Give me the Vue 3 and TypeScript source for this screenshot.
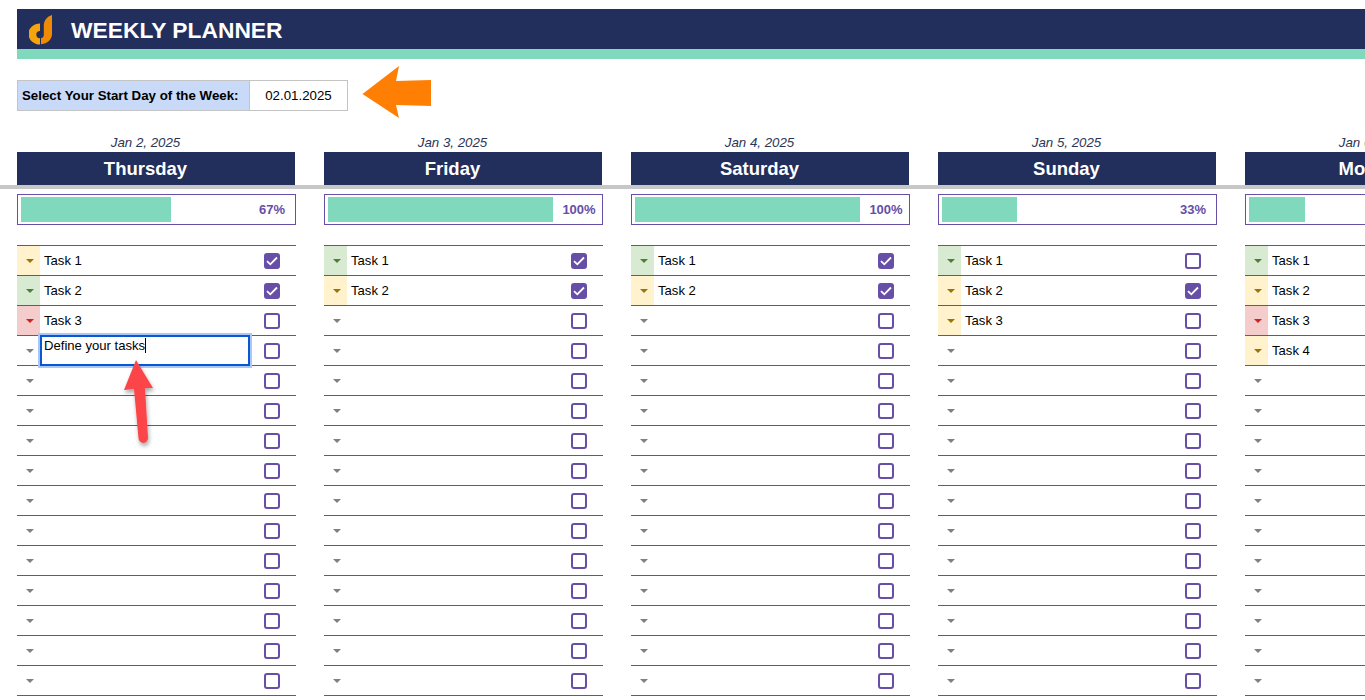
<script setup lang="ts">
type Tone = 'yellow' | 'green' | 'red' | 'none'
interface Task { name: string; tone: Tone; done: boolean }
interface Day { date: string; title: string; pct: number; label: string; tasks: Task[] }

const ROWS = 15
const day = (date: string, title: string, pct: number, label: string, tasks: Task[]): Day => ({
  date, title, pct, label,
  tasks: [...tasks, ...Array.from({ length: ROWS - tasks.length }, (): Task => ({ name: '', tone: 'none', done: false }))],
})

const days: Day[] = [
  day('Jan 2, 2025', 'Thursday', 150, '67%', [
    { name: 'Task 1', tone: 'yellow', done: true },
    { name: 'Task 2', tone: 'green', done: true },
    { name: 'Task 3', tone: 'red', done: false },
  ]),
  day('Jan 3, 2025', 'Friday', 225, '100%', [
    { name: 'Task 1', tone: 'green', done: true },
    { name: 'Task 2', tone: 'yellow', done: true },
  ]),
  day('Jan 4, 2025', 'Saturday', 225, '100%', [
    { name: 'Task 1', tone: 'green', done: true },
    { name: 'Task 2', tone: 'yellow', done: true },
  ]),
  day('Jan 5, 2025', 'Sunday', 75, '33%', [
    { name: 'Task 1', tone: 'green', done: false },
    { name: 'Task 2', tone: 'yellow', done: true },
    { name: 'Task 3', tone: 'yellow', done: false },
  ]),
  day('Jan 6, 2025', 'Monday', 56, '25%', [
    { name: 'Task 1', tone: 'green', done: false },
    { name: 'Task 2', tone: 'yellow', done: false },
    { name: 'Task 3', tone: 'red', done: false },
    { name: 'Task 4', tone: 'yellow', done: false },
  ]),
]
</script>

<template>
  <div class="page">
    <header class="banner">
      <svg class="logo" width="24" height="30" viewBox="0 0 24 30" aria-hidden="true">
        <path d="M11 8.500A11.500 10.500 0 0 0 11 29.500L11 23.300A3.700 3.700 0 0 1 11 15.900Z" fill="#f5a40e" />
        <path d="M12 29.300C18.500 28.500 23 24.500 23 19L23 0C18 1.500 14.800 5.500 14.800 10.500L14.800 19.500A3.400 3.800 0 0 1 12 23.300Z" fill="#ef8a06" />
      </svg>
      <h1 class="banner-title">WEEKLY PLANNER</h1>
    </header>
    <div class="accent"></div>

    <section class="selector">
      <div class="selector-box">
        <div class="selector-label">Select Your Start Day of the Week:</div>
        <div class="selector-value">02.01.2025</div>
      </div>
      <svg class="orange-arrow" width="70" height="52" viewBox="0 0 70 52" aria-hidden="true">
        <path d="M0.500 28L37 0L34 15L69 14L69 40L34 39L37 52Z" fill="#ff7f04" />
      </svg>
    </section>

    <section class="head-row">
      <div v-for="d in days" :key="d.date" class="head-col">
        <div class="date">{{ d.date }}</div>
        <div class="title">{{ d.title }}</div>
      </div>
    </section>
    <div class="rule"></div>

    <section class="body-row">
      <div v-for="(d, di) in days" :key="d.date" class="col">
        <div class="progress">
          <div class="track">
            <div class="fill" :style="{ width: d.pct + 'px' }"></div>
          </div>
          <span class="pct">{{ d.label }}</span>
        </div>
        <div class="tasks">
          <div v-for="(t, i) in d.tasks" :key="i" class="task">
            <div class="chip" :class="t.tone"><span class="caret"></span></div>
            <div class="name">{{ t.name }}</div>
            <span class="check" :class="{ on: t.done }">
              <svg v-if="t.done" width="12" height="10" viewBox="0 0 12 10" aria-hidden="true">
                <path d="M1 5.200L4.300 8.300L11 1.500" fill="none" stroke="#fff" stroke-width="1.800" />
              </svg>
            </span>
            <div v-if="di === 0 && i === 3" class="editor">Define your tasks<span class="cursor"></span></div>
            <svg v-if="di === 0 && i === 3" class="red-arrow" width="50" height="95" viewBox="0 0 50 95" aria-hidden="true">
              <defs>
                <filter id="arrow-shadow" x="-30%" y="-20%" width="160%" height="140%">
                  <feDropShadow dx="1" dy="3" stdDeviation="2" flood-color="#000" flood-opacity="0.35" />
                </filter>
              </defs>
              <path d="M21 5L9 35L19 34L23.500 83.300A4.750 4.750 0 0 0 33 83L30 33L38 33Z" fill="#fc4549" filter="url(#arrow-shadow)" />
            </svg>
          </div>
        </div>
      </div>
    </section>
  </div>
</template>

<style>
html, body { margin: 0; background: #fff; overflow: hidden; }
</style>

<style scoped>
.page {
  height: 700px;
  width: 1365px;
  overflow: hidden;
  padding-top: 9px;
  box-sizing: border-box;
  background: #fff;
  font-family: "Liberation Sans", Arial, sans-serif;
  color: #000;
}
.banner {
  margin-left: 17px;
  height: 40px;
  background: #222e5b;
  display: flex;
  align-items: center;
  padding-left: 12px;
}
.logo { flex: none; margin: 2px 18px 0 0; }
.banner-title {
  margin: 2px 0 0;
  color: #fff;
  font-size: 22.8px;
  font-weight: 700;
  line-height: 40px;
}
.accent { margin-left: 17px; height: 10px; background: #80d8bd; }

.selector {
  display: flex;
  align-items: flex-start;
  margin: 7px 0 0 17px;
  height: 52px;
}
.selector-box {
  display: flex;
  height: 31px;
  box-sizing: border-box;
  border: 1px solid #c4c4c4;
  width: 331px;
  margin-top: 14px;
}
.selector-label {
  width: 232px;
  box-sizing: border-box;
  background: #c9daf8;
  border-right: 1px solid #c4c4c4;
  padding-left: 4px;
  font-size: 13.3px;
  font-weight: 700;
  line-height: 29px;
  white-space: nowrap;
}
.selector-value {
  flex: 1;
  text-align: center;
  font-size: 13.3px;
  line-height: 29px;
}
.orange-arrow { flex: none; margin-left: 14px; }

.head-row {
  display: flex;
  gap: 29px;
  margin: 17px 0 0 17px;
}
.head-col { flex: none; width: 278px; }
.date {
  height: 17px;
  padding-right: 21px;
  text-align: center;
  font-size: 13.3px;
  font-style: italic;
  line-height: 15px;
  color: #2b3557;
}
.title {
  height: 33px;
  padding-right: 21px;
  background: #222e5b;
  color: #fff;
  text-align: center;
  font-size: 18.5px;
  font-weight: 700;
  line-height: 33px;
  white-space: nowrap;
  overflow: hidden;
}
.rule { height: 4px; background: #c7c7c7; }

.body-row {
  display: flex;
  gap: 28px;
  margin: 5px 0 0 17px;
}
.col { flex: none; width: 279px; }
.progress {
  height: 31px;
  box-sizing: border-box;
  border: 1px solid #674ea7;
  display: flex;
  align-items: center;
  padding: 2px 0 2px 3px;
}
.track { flex: none; width: 225px; height: 25px; }
.fill { height: 100%; background: #80d8bd; }
.pct {
  flex: none;
  width: 46px;
  margin-left: 3px;
  text-align: center;
  font-size: 13px;
  font-weight: 700;
  color: #674ea7;
}
.tasks {
  margin-top: 20px;
  border-top: 1px solid #674ea7;
}
.task {
  position: relative;
  height: 30px;
  box-sizing: border-box;
  border-bottom: 1px solid #674ea7;
  display: flex;
  align-items: stretch;
}
.chip {
  flex: none;
  width: 23px;
  display: flex;
  align-items: center;
  justify-content: center;
}
.caret {
  width: 0;
  height: 0;
  margin-left: 2px;
  border-left: 4px solid transparent;
  border-right: 4px solid transparent;
  border-top: 4px solid #808080;
}
.yellow { background: #fff2cc; }
.yellow .caret { border-top-color: #9c7408; }
.green { background: #d9ead3; }
.green .caret { border-top-color: #4d7f3a; }
.red { background: #f4cccc; }
.red .caret { border-top-color: #cc2222; }
.name {
  flex: 1;
  padding-left: 4px;
  font-size: 13.1px;
  line-height: 29px;
  white-space: nowrap;
}
.check {
  flex: none;
  width: 16px;
  height: 16px;
  box-sizing: border-box;
  margin: 7px 16px 0 0;
  border: 2px solid #674ea7;
  border-radius: 3px;
  display: flex;
  align-items: center;
  justify-content: center;
  background: #fff;
}
.check.on { background: #674ea7; }
.editor {
  position: absolute;
  left: 23px;
  top: -1px;
  width: 210px;
  height: 31px;
  box-sizing: border-box;
  border: 2px solid #0b57d0;
  outline: 2px solid #a8c7fa;
  background: #fff;
  padding-left: 2px;
  font-size: 13.1px;
  line-height: 17px;
  white-space: nowrap;
  z-index: 1;
}
.cursor {
  display: inline-block;
  width: 1px;
  height: 15px;
  background: #000;
  vertical-align: -3px;
}
.red-arrow {
  position: absolute;
  left: 98px;
  top: 19px;
  z-index: 2;
}
</style>
